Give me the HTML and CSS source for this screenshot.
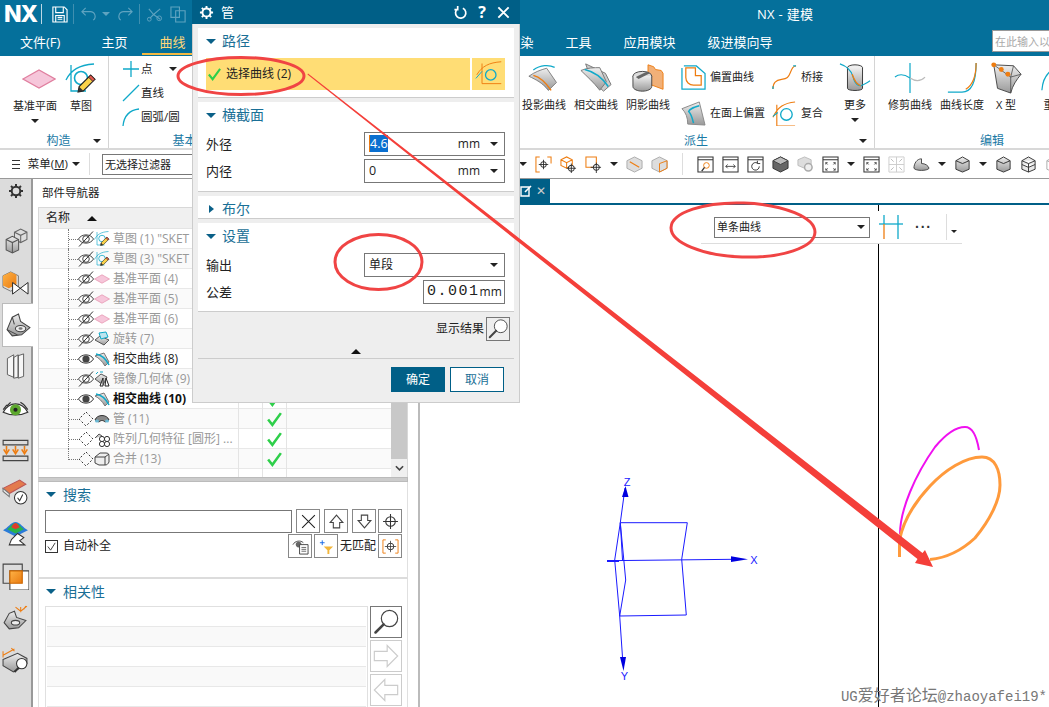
FILE: index.html
```html
<!DOCTYPE html>
<html lang="zh-CN">
<head>
<meta charset="utf-8">
<title>NX - 建模</title>
<link rel="stylesheet" href="styles.css">
</head>
<body>
<svg class="defs" width="0" height="0" aria-hidden="true">
  <defs>
    <linearGradient id="gr" x1="0" y1="0" x2="0" y2="1"><stop offset="0" stop-color="#eee"/><stop offset="1" stop-color="#999"/></linearGradient>
    <linearGradient id="gro" x1="0" y1="0" x2="1" y2="1"><stop offset="0" stop-color="#ffb347"/><stop offset="1" stop-color="#e87a10"/></linearGradient>
    <symbol id="gear" viewBox="0 0 16 16"><circle cx="8" cy="8" r="4.300" fill="none" stroke="currentColor" stroke-width="2"/><path d="M8 1v2.600M8 12.400V15M1 8h2.600M12.400 8H15M3 3l1.900 1.900M11.100 11.100L13 13M13 3l-1.900 1.900M4.900 11.100L3 13" stroke="currentColor" stroke-width="2"/></symbol>
    <symbol id="plane" viewBox="0 0 34 20"><path d="M1 10L17 1l16 9-16 9z" fill="#f6c6da" stroke="#e07f9f" stroke-width="1.200"/></symbol>
    <symbol id="pencil" viewBox="0 0 20 20"><path d="M14 2l4 4L7 17l-5 1 1-5z" fill="#fad24a" stroke="#222" stroke-width="1.100"/><path d="M14 2l4 4-2 2-4-4z" fill="#e2574c" stroke="#222" stroke-width=".8"/><path d="M3 13l4 4-5 1z" fill="#333"/></symbol>
    <symbol id="sketch" viewBox="0 0 32 32"><path d="M1 17C6 7 14 2 29 1M6 2v26h15" fill="none" stroke="#10a9c9" stroke-width="1.300"/><circle cx="16" cy="15" r="6.500" fill="none" stroke="#10a9c9" stroke-width="1.600"/><use href="#pencil" x="11" y="10" width="21" height="21"/></symbol>
    <symbol id="point" viewBox="0 0 20 20"><path d="M10 2v16M2 10h16" stroke="#10a9c9" stroke-width="1.300"/></symbol>
    <symbol id="line" viewBox="0 0 20 20"><path d="M2 18L18 2" stroke="#10a9c9" stroke-width="1.300"/></symbol>
    <symbol id="arc" viewBox="0 0 20 20"><path d="M2 19C3 9 9 3 18 2" fill="none" stroke="#10a9c9" stroke-width="1.300"/></symbol>
    <symbol id="project" viewBox="0 0 36 32"><path d="M6 7C14 1 24 1 30 4" fill="none" stroke="#10a9c9" stroke-width="1.400"/><path d="M1 14C8 9 14 7 21 5l11 16-9 9C16 21 9 18 1 14z" fill="url(#gr)" stroke="#777"/><path d="M6 13c8 2 14 8 20 17" fill="none" stroke="#ee7d11" stroke-width="1.600"/></symbol>
    <symbol id="intersect" viewBox="0 0 34 32"><path d="M6 1l21 10 6 12-8 7-13-12z" fill="#ccc" stroke="#777"/><path d="M1 8c7-3 14-3 20-3l7 15-7 9C14 20 8 15 1 8z" fill="url(#gr)" stroke="#777"/><path d="M5 7c9 2 18 8 25 18" fill="none" stroke="#10a9c9" stroke-width="1.600"/></symbol>
    <symbol id="shadow" viewBox="0 0 34 32"><path d="M17 2l6 2 2 3 6 1 2 3v17L17 22z" fill="#f1b078" stroke="#ee7d11"/><ellipse cx="11" cy="14" rx="10" ry="5" fill="#ddd" stroke="#444"/><path d="M1 14v11c0 3 5 5 10 5s10-2 10-5V14" fill="url(#gr)" stroke="#444"/><path d="M4 15L16 9l3 2-12 6z" fill="#666"/></symbol>
    <symbol id="offset" viewBox="0 0 26 26"><path d="M3 1H16L25 9V25H1V3" fill="none" stroke="#10a9c9" stroke-width="1.300"/><path d="M5 3v10a8 8 0 0 0 8 8h8V11h-6V3z" fill="none" stroke="#ee7d11" stroke-width="1.300"/></symbol>
    <symbol id="faceoffset" viewBox="0 0 26 26"><path d="M1 8L19 1l6 24-18-1C7 17 5 12 1 8z" fill="url(#gr)" stroke="#888"/><path d="M19 5C12 7 9 8 8 11c3 3 4 8 5 12" fill="none" stroke="#10a9c9" stroke-width="1.600"/></symbol>
    <symbol id="bridge" viewBox="0 0 26 26"><path d="M1 25C1 18 4 16 10 15S17 13 19 8 22 1 25 1" fill="none" stroke="#ee7d11" stroke-width="1.200"/><path d="M1 25v-3M25 1h-3" stroke="#10a9c9" stroke-width="1.300"/></symbol>
    <symbol id="composite" viewBox="0 0 26 26"><path d="M1 17C6 6 13 2 24 1M5 4v22h19" fill="none" stroke="#ee7d11" stroke-width="1.200"/><circle cx="15" cy="14" r="6" fill="none" stroke="#10a9c9" stroke-width="1.400"/><path d="M1 16l5-4" stroke="#10a9c9" stroke-width="1.200"/></symbol>
    <symbol id="more" viewBox="0 0 34 32"><ellipse cx="17" cy="5" rx="8" ry="3" fill="#eee" stroke="#333"/><path d="M9 5v22c0 3 16 3 16 0V5" fill="url(#gr)" stroke="#333"/><path d="M1 1c6 2 12 6 14 14s6 10 9 9 6-3 9-5" fill="none" stroke="#10a9c9" stroke-width="1.200"/><path d="M14 12c2 6 5 11 9 12" fill="none" stroke="#ee7d11" stroke-width="1.400"/></symbol>
    <symbol id="trim" viewBox="0 0 34 34"><path d="M17 1v32" stroke="#10a9c9" stroke-width="1.300"/><path d="M1 16c5-4 10-3 16 1" fill="none" stroke="#10a9c9" stroke-width="1.200"/><path d="M17 17c6 4 11 4 16-1" fill="none" stroke="#bbb" stroke-width="1.200"/></symbol>
    <symbol id="length" viewBox="0 0 34 34"><path d="M2 32h15C26 32 32 24 32 1" fill="none" stroke="#10a9c9" stroke-width="1.300"/><path d="M32 1c0 13-3 23-11 28" fill="none" stroke="#ee7d11" stroke-width="1.300"/></symbol>
    <symbol id="xform" viewBox="0 0 34 34"><path d="M4 3l21 1 8 9c-5 6-9 12-11 20L8 28z" fill="url(#gr)" stroke="#444"/><path d="M25 4l-3 12L4 3M22 16l11-3M22 16v17" fill="none" stroke="#444" stroke-width=".8"/><g fill="#ee7d11"><circle cx="4" cy="3" r="2.600"/><circle cx="12" cy="8" r="2.600"/><circle cx="19" cy="13" r="2.600"/></g></symbol>
    <symbol id="arcthin" viewBox="0 0 34 34"><path d="M2 30C3 14 12 4 32 2" fill="none" stroke="#10a9c9" stroke-width="1.300"/></symbol>
    <symbol id="bracket" viewBox="0 0 18 18"><path d="M5 1H1v16h4M13 1h4v7" fill="none" stroke="#ee7d11" stroke-width="1.100"/><circle cx="9" cy="9" r="3" fill="none" stroke="#222"/><path d="M9 4v10M4 9h10" stroke="#222" stroke-width=".9"/></symbol>
    <symbol id="cubecross" viewBox="0 0 18 18"><path d="M1 4l6-3 6 3v6l-6 3-6-3zM1 4l6 3 6-3M7 7v6" fill="none" stroke="#ee7d11" stroke-width="1.100"/><circle cx="12" cy="13" r="3.200" fill="#fff" stroke="#222"/><path d="M12 8v10M7 13h10" stroke="#222" stroke-width=".9"/></symbol>
    <symbol id="squarecross" viewBox="0 0 18 18"><path d="M1 1h11v11H1z" fill="none" stroke="#ee7d11" stroke-width="1.100"/><circle cx="12" cy="12" r="3.200" fill="#fff" stroke="#222"/><path d="M12 7v11M6 12h11" stroke="#222" stroke-width=".9"/></symbol>
    <symbol id="cubecut" viewBox="0 0 18 18"><path d="M1 5l8-4 8 4v8l-8 4-8-4z" fill="#ddd" stroke="#aaa"/><path d="M4 6l10 6" stroke="#ee7d11" stroke-width="1.200"/></symbol>
    <symbol id="cubeface" viewBox="0 0 18 18"><path d="M1 5l8-4 8 4v8l-8 4-8-4z" fill="#ddd" stroke="#aaa"/><path d="M9 8l8-3v8l-8 4z" fill="none" stroke="#ee7d11"/></symbol>
    <symbol id="winzoom" viewBox="0 0 18 18"><path d="M1 1h16v16H1zM1 4h16" fill="none" stroke="#333" stroke-width="1.100"/><circle cx="10" cy="10" r="3" fill="none" stroke="#ee7d11"/><path d="M8 12l-3 4" stroke="#333" stroke-width="1.400"/></symbol>
    <symbol id="winarrow" viewBox="0 0 18 18"><path d="M1 1h16v16H1zM1 4h16" fill="none" stroke="#333" stroke-width="1.100"/><path d="M4 11h10M6 9l-2 2 2 2M12 9l2 2-2 2" fill="none" stroke="#333" stroke-width=".9"/></symbol>
    <symbol id="winrot" viewBox="0 0 18 18"><path d="M1 1h16v16H1zM1 4h16" fill="none" stroke="#333" stroke-width="1.100"/><path d="M13 11a4 4 0 1 1-2-3.500M11 5v3h3" fill="none" stroke="#333"/></symbol>
    <symbol id="darkcube" viewBox="0 0 18 18"><path d="M1 5l8-4 8 4v8l-8 4-8-4z" fill="#666" stroke="#333"/><path d="M1 5l8-4 8 4-8 4z" fill="#bbb" stroke="#444"/></symbol>
    <symbol id="lightgear" viewBox="0 0 18 18"><path d="M1 4l7-3 7 3v6l-7 3-7-3z" fill="#ddd" stroke="#bbb"/><circle cx="12" cy="12" r="4" fill="#eee" stroke="#aaa" stroke-width="1.600"/></symbol>
    <symbol id="winfit" viewBox="0 0 18 18"><path d="M1 1h16v16H1zM1 4h16" fill="none" stroke="#333" stroke-width="1.100"/><path d="M4 7l2 2M4 7h2M4 7v2M14 7l-2 2M14 7h-2M14 7v2M4 15l2-2M4 15h2M4 15v-2M14 15l-2-2M14 15h-2M14 15v-2" fill="none" stroke="#333" stroke-width=".8"/></symbol>
    <symbol id="fitlight" viewBox="0 0 18 18"><path d="M1 1h16v16H1zM9 1v16M1 9h16" fill="none" stroke="#ccc"/><path d="M3 3l3 3M15 3l-3 3M3 15l3-3M15 15l-3-3" stroke="#bbb"/></symbol>
    <symbol id="shade" viewBox="0 0 18 18"><path d="M1 13c0-5 3-10 8-10v5c4 0 7 2 8 5-2 3-14 3-16 0z" fill="url(#gr)" stroke="#444"/></symbol>
    <symbol id="cylcube" viewBox="0 0 18 18"><path d="M2 5l7-4 7 4v9l-7 3-7-3z" fill="url(#gr)" stroke="#333"/><path d="M2 5l7 3 7-3" fill="none" stroke="#333"/></symbol>
    <symbol id="wirecube" viewBox="0 0 18 18"><path d="M2 5l7-4 7 4v9l-7 3-7-3zM2 5l7 3 7-3M2 9l7 3 7-3M9 8v9" fill="#e8e8e8" stroke="#333"/></symbol>
    <symbol id="ghostcube" viewBox="0 0 18 18"><path d="M2 5l7-4 7 4v9l-7 3-7-3zM2 5l7 3 7-3M9 8v9" fill="none" stroke="#aaa"/></symbol>
    <symbol id="eye" viewBox="0 0 16 16"><path d="M.5 8c3-5.500 12-5.500 15 0-3 5.500-12 5.500-15 0z" fill="#fff" stroke="#333"/><circle cx="8" cy="8" r="3.600" fill="#444"/></symbol>
    <symbol id="eyeoff" viewBox="0 0 16 16"><path d="M.5 8c3-5.500 12-5.500 15 0-3 5.500-12 5.500-15 0z" fill="#fff" stroke="#444"/><circle cx="8" cy="8" r="3.300" fill="none" stroke="#444"/><path d="M1 15.500L15 .5" stroke="#333"/></symbol>
    <symbol id="hidden" viewBox="0 0 16 16"><path d="M8 1l7 7-7 7-7-7z" fill="none" stroke="#333" stroke-dasharray="2 2"/></symbol>
    <symbol id="revolve" viewBox="0 0 16 16"><path d="M1 9l5-4 9 4-5 5z" fill="url(#gr)" stroke="#555"/><path d="M5 2l7-1 2 5-7 2z" fill="#bde4ef" stroke="#10a9c9"/></symbol>
    <symbol id="curve16" viewBox="0 0 16 16"><path d="M1 5l9-3 5 9-4 4C8 10 5 7 1 5z" fill="url(#gr)" stroke="#777"/><path d="M2 3c6 1 10 5 13 11" fill="none" stroke="#10a9c9" stroke-width="1.600"/></symbol>
    <symbol id="mirror" viewBox="0 0 16 16"><path d="M1 8l6-5 6 3-4 8z" fill="url(#gr)" stroke="#555"/><path d="M6 15l3-8v8zM11 15l1-8 3 8z" fill="#fff" stroke="#222"/><path d="M2 3l2-2M6 1h3" stroke="#10a9c9"/></symbol>
    <symbol id="tube" viewBox="0 0 16 16"><path d="M1 9c2-6 12-6 14 0l-4 2c-2-2-4-2-6 0z" fill="#888" stroke="#333"/><ellipse cx="3" cy="10" rx="2" ry="1.500" fill="#6bb9d4"/><ellipse cx="13" cy="10" rx="2" ry="1.500" fill="#6bb9d4"/></symbol>
    <symbol id="pattern" viewBox="0 0 16 16"><path d="M1 7l4-4 3 2" fill="url(#gr)" stroke="#555"/><g fill="#fff" stroke="#333"><circle cx="8" cy="8" r="2.600"/><circle cx="13" cy="8" r="2.600"/><circle cx="8" cy="13" r="2.600"/><circle cx="13" cy="13" r="2.600"/></g></symbol>
    <symbol id="unite" viewBox="0 0 16 16"><path d="M1 6l5-4h6c2 0 3 1 3 3v6c-1 2-2 3-4 3H5l-4-2z" fill="#eee" stroke="#444"/><path d="M1 6h10l4-3M11 6v8" fill="none" stroke="#444"/></symbol>
    <symbol id="blocks" viewBox="0 0 24 26"><path d="M11 5l6-3 6 3v7l-6 3-6-3z" fill="#ddd" stroke="#666"/><path d="M11 5l6 3 6-3M17 8v7" fill="none" stroke="#666"/><path d="M3 12l6-3 6 3v10l-6 3-6-3z" fill="url(#gr)" stroke="#555"/><path d="M3 12l6 3 6-3M9 15v10" fill="none" stroke="#555"/></symbol>
    <symbol id="assembly" viewBox="0 0 28 26"><path d="M1 6l8-4 8 4v12l-8 4-8-4z" fill="#ddd" stroke="#777"/><path d="M1 6l8-4 6 3v10l-8 4-6-3z" fill="url(#gro)"/><path d="M11 13v12l16-12v12z" fill="#fff" stroke="#222"/></symbol>
    <symbol id="part" viewBox="0 0 26 26"><path d="M2 17L7 5l6-3 2 7 9 6-8 7-9 1z" fill="url(#gr)" stroke="#444"/><path d="M2 17l10 5M7 5l2 7" fill="none" stroke="#444"/><ellipse cx="15" cy="16" rx="5" ry="3" fill="#eee" stroke="#444"/><ellipse cx="15" cy="16" rx="2" ry="1.200" fill="#777"/></symbol>
    <symbol id="books" viewBox="0 0 20 30"><path d="M1 6l7-4v25l-7-3zM8 5l5-3v25l-5 1zM13 3l6-2v25l-6 2z" fill="#f6f6f6" stroke="#555"/></symbol>
    <symbol id="eyegreen" viewBox="0 0 22 14"><path d="M1 10c5-9 15-9 20 0-6 3-14 3-20 0z" fill="#fff" stroke="#333"/><circle cx="11" cy="8" r="4.500" fill="#5da82e"/><circle cx="11" cy="8" r="1.700" fill="#222"/><path d="M1 8l3-4M4 5l3-3M15 2l3 2M18 4l3 4" stroke="#333"/></symbol>
    <symbol id="arrows" viewBox="0 0 24 20"><path d="M1 1h22v4H1zM1 15h22v4H1z" fill="none" stroke="#444"/><g fill="none" stroke="#ee7d11" stroke-width="1.400"><path d="M4 6v5M1.500 9L4 13l2.500-4M12 6v5M9.500 9l2.500 4 2.500-4M20 6v5M17.500 9l2.500 4 2.500-4"/></g></symbol>
    <symbol id="card" viewBox="0 0 26 26"><path d="M1 9l16-8 6 4-16 9z" fill="#e37b4e" stroke="#b55"/><path d="M1 9l6 5v3L1 12z" fill="#eee" stroke="#777"/><circle cx="18" cy="18" r="6" fill="#fff" stroke="#333"/><path d="M15 18l2 3 3-6" fill="none" stroke="#333"/></symbol>
    <symbol id="rainbow" viewBox="0 0 26 26"><path d="M1 9c4-2 8-8 12-8s8 6 12 8l-12 6z" fill="#2a7bd8"/><path d="M5 8c3-2 5-6 8-6s5 4 8 6l-8 4z" fill="#29b34a"/><path d="M9 6c1-2 3-4 4-4s3 2 4 4l-4 2z" fill="#e03a2c"/><path d="M9 18l6-6 6 4-4 3 5 4H7z" fill="#fff" stroke="#333"/></symbol>
    <symbol id="overlap" viewBox="0 0 24 24"><path d="M1 1h17v17H1z" fill="none" stroke="#444"/><path d="M7 7h17v17H7z" fill="#fff" stroke="#444"/><path d="M7 7h11v11H7z" fill="url(#gro)" stroke="#c60"/></symbol>
    <symbol id="dimpart" viewBox="0 0 26 26"><path d="M2 17l5-9 5-2 2 6 9 3-7 7-9 1z" fill="url(#gr)" stroke="#444"/><ellipse cx="13" cy="17" rx="4" ry="2.200" fill="#eee" stroke="#444"/><path d="M13 2l5 4 6-5M18 2v5M23 1l-2 3" fill="none" stroke="#ee7d11"/></symbol>
    <symbol id="dimbox" viewBox="0 0 26 26"><path d="M1 12l14-6 9 5v5l-13 8-10-6z" fill="url(#gr)" stroke="#444"/><circle cx="19" cy="16" r="5" fill="#fff" stroke="#333"/><path d="M16 20l-4 4" stroke="#333" stroke-width="2"/><path d="M1 8l11-6M1 4v6M9 1l3 3" fill="none" stroke="#ee7d11"/></symbol>
    <symbol id="lens" viewBox="0 0 24 24"><circle cx="15" cy="9" r="7" fill="#fff" stroke="#444"/><path d="M10 14l-7 7" stroke="#444" stroke-width="2.200" stroke-linecap="round"/></symbol>
    <symbol id="target" viewBox="0 0 16 16"><circle cx="8" cy="8" r="4.500" fill="none" stroke="#333"/><path d="M8 1v14M1 8h14" stroke="#333"/></symbol>
    <symbol id="pick" viewBox="0 0 32 32"><path d="M2 17C8 7 16 3 30 2M8 4v23h22" fill="none" stroke="#ee7d11" stroke-width="1.100"/><circle cx="18" cy="17" r="6" fill="none" stroke="#10a9c9" stroke-width="1.500"/><path d="M1 21l7-8" stroke="#10a9c9" stroke-width="1.100"/></symbol>
  </defs>
</svg>

<div class="app">
  <header class="titlebar">
    <b class="logo">NX</b>
    <span class="tb-sep"></span>
    <svg class="tb-ico" viewBox="0 0 18 18"><path d="M2 1h12l3 3v13H2zM5 1v6h8V1M5 17v-7h9v7M7 12h5M7 14h5" fill="none" stroke="#fff" stroke-width="1.200"/></svg>
    <span class="tb-sep tb-sep-dim"></span>
    <svg class="tb-ico" viewBox="0 0 18 18"><path d="M6 2L2 6l4 4M2 6h9a5 5 0 0 1 3 9" fill="none" stroke="#5fa3c0" stroke-width="1.200"/></svg>
    <i class="caret caret-dim"></i>
    <svg class="tb-ico" viewBox="0 0 18 18"><path d="M12 2l4 4-4 4M16 6H7a5 5 0 0 0-3 9" fill="none" stroke="#5fa3c0" stroke-width="1.200"/></svg>
    <span class="tb-sep tb-sep-dim"></span>
    <svg class="tb-ico" viewBox="0 0 18 18"><path d="M8 9L3 3M8 9l7-6M8 9l-4 4M8 9l7 5" fill="none" stroke="#5fa3c0" stroke-width="1.200"/><circle cx="3.500" cy="14" r="2" fill="none" stroke="#5fa3c0"/><circle cx="14" cy="13" r="2.500" fill="none" stroke="#5fa3c0"/></svg>
    <svg class="tb-ico tb-copy" viewBox="0 0 18 18"><path d="M1 1h9v11H1zM6 5h10v12H6z" fill="none" stroke="#5fa3c0" stroke-width="1.200"/></svg>
    <span class="tb-title">NX - 建模</span>
  </header>

  <nav class="tabs">
    <span class="tab tab-file">文件(F)</span>
    <span class="tab">主页</span>
    <span class="tab tab-on">曲线</span>
    <span class="tab-gap"></span>
    <span class="tab">渲染</span>
    <span class="tab">工具</span>
    <span class="tab">应用模块</span>
    <span class="tab">级进模向导</span>
    <input class="cmd-search" placeholder="在此输入以搜索">
  </nav>

  <section class="ribbon">
    <div class="group g-construct">
      <div class="tools">
        <div class="big big-plane"><svg class="ico32"><use href="#plane" x="3" y="6" width="34" height="20"/></svg><span>基准平面</span><i class="caret"></i></div>
        <div class="big big-sketch"><svg class="ico32"><use href="#sketch"/></svg><span>草图</span></div>
      </div>
      <div class="glabel"><span></span><span>构造</span><i class="caret gcaret"></i></div>
    </div>
    <div class="group g-basic">
      <div class="tools">
        <div class="col">
          <div class="mini"><svg class="ico20"><use href="#point"/></svg><span>点</span><i class="caret"></i></div>
          <div class="mini"><svg class="ico20"><use href="#line"/></svg><span>直线</span></div>
          <div class="mini"><svg class="ico20"><use href="#arc"/></svg><span>圆弧/圆</span></div>
        </div>
      </div>
      <div class="glabel"><span></span><span>基本</span><span></span></div>
    </div>
    <div class="g-spacer"></div>
    <div class="group g-derive">
      <div class="tools">
        <div class="big"><svg class="ico32"><use href="#project"/></svg><span>投影曲线</span></div>
        <div class="big"><svg class="ico32"><use href="#intersect"/></svg><span>相交曲线</span></div>
        <div class="big"><svg class="ico32"><use href="#shadow"/></svg><span>阴影曲线</span></div>
        <div class="col col-a">
          <div class="small"><svg class="ico25"><use href="#offset"/></svg><span>偏置曲线</span></div>
          <div class="small"><svg class="ico25"><use href="#faceoffset"/></svg><span>在面上偏置</span></div>
        </div>
        <div class="col col-b">
          <div class="small"><svg class="ico25"><use href="#bridge"/></svg><span>桥接</span></div>
          <div class="small"><svg class="ico25"><use href="#composite"/></svg><span>复合</span></div>
        </div>
        <div class="big big-more"><svg class="ico32"><use href="#more"/></svg><span>更多</span><i class="caret"></i></div>
      </div>
      <div class="glabel"><span></span><span>派生</span><i class="caret gcaret"></i></div>
    </div>
    <div class="group g-edit">
      <div class="tools">
        <div class="big"><svg class="ico32"><use href="#trim"/></svg><span>修剪曲线</span></div>
        <div class="big"><svg class="ico32"><use href="#length"/></svg><span>曲线长度</span></div>
        <div class="big big-x"><svg class="ico32"><use href="#xform"/></svg><span>X 型</span></div>
        <div class="big big-next"><svg class="ico32"><use href="#arcthin"/></svg><span>重</span></div>
      </div>
      <div class="glabel glabel-edit"><span>编辑</span></div>
    </div>
  </section>

  <div class="quickbar">
    <span class="menu-btn"><span class="burger"></span>菜单(<u>M</u>)<i class="caret"></i></span>
    <span class="q-sep"></span>
    <div class="filter"><span>无选择过滤器</span></div>
    <div class="qicons">
      <i class="caret"></i>
      <svg class="q"><use href="#bracket"/></svg>
      <svg class="q"><use href="#cubecross"/></svg>
      <svg class="q"><use href="#squarecross"/></svg>
      <i class="caret"></i>
      <svg class="q"><use href="#cubecut"/></svg>
      <svg class="q"><use href="#cubeface"/></svg>
      <span class="q-sep q-sep-m"></span>
      <svg class="q"><use href="#winzoom"/></svg>
      <svg class="q"><use href="#winarrow"/></svg>
      <svg class="q"><use href="#winrot"/></svg>
      <svg class="q"><use href="#darkcube"/></svg>
      <svg class="q"><use href="#lightgear"/></svg>
      <svg class="q"><use href="#winfit"/></svg>
      <i class="caret"></i>
      <svg class="q"><use href="#winfit"/></svg>
      <svg class="q"><use href="#fitlight"/></svg>
      <svg class="q"><use href="#shade"/></svg>
      <i class="caret"></i>
      <svg class="q"><use href="#cylcube"/></svg>
      <i class="caret"></i>
      <svg class="q"><use href="#cylcube"/></svg>
      <svg class="q"><use href="#wirecube"/></svg>
      <svg class="q"><use href="#ghostcube"/></svg>
    </div>
  </div>

  <main class="main">
    <aside class="rail">
      <div class="rail-item rail-gear"><svg class="rail-ico16"><use href="#gear"/></svg></div>
      <div class="rail-item rail-first"><svg class="rail-ico"><use href="#blocks"/></svg></div>
      <div class="rail-item"><svg class="rail-ico"><use href="#assembly"/></svg></div>
      <div class="rail-item rail-active"><svg class="rail-ico"><use href="#part"/></svg></div>
      <div class="rail-item"><svg class="rail-ico"><use href="#books"/></svg></div>
      <div class="rail-item"><svg class="rail-ico"><use href="#eyegreen"/></svg></div>
      <div class="rail-item"><svg class="rail-ico"><use href="#arrows"/></svg></div>
      <div class="rail-item"><svg class="rail-ico"><use href="#card"/></svg></div>
      <div class="rail-item"><svg class="rail-ico"><use href="#rainbow"/></svg></div>
      <div class="rail-item"><svg class="rail-ico"><use href="#overlap"/></svg></div>
      <div class="rail-item"><svg class="rail-ico"><use href="#dimpart"/></svg></div>
      <div class="rail-item"><svg class="rail-ico"><use href="#dimbox"/></svg></div>
    </aside>

    <section class="nav">
      <div class="nav-title">部件导航器</div>
      <div class="tree">
        <div class="tree-body">
          <div class="tree-head"><span class="th-name">名称</span><i class="th-up"></i></div>
          <div class="row dim"><span class="branch"></span><svg class="r16"><use href="#eyeoff"/></svg><svg class="r16"><use href="#sketch"/></svg><span class="rname">草图 (1) "SKET</span><span class="c"></span><span class="c"></span><span class="c"></span></div>
          <div class="row dim"><span class="branch"></span><svg class="r16"><use href="#eyeoff"/></svg><svg class="r16"><use href="#sketch"/></svg><span class="rname">草图 (3) "SKET</span><span class="c"></span><span class="c"></span><span class="c"></span></div>
          <div class="row dim"><span class="branch"></span><svg class="r16"><use href="#eyeoff"/></svg><svg class="r16"><use href="#plane"/></svg><span class="rname">基准平面 (4)</span><span class="c"></span><span class="c"></span><span class="c"></span></div>
          <div class="row dim"><span class="branch"></span><svg class="r16"><use href="#eyeoff"/></svg><svg class="r16"><use href="#plane"/></svg><span class="rname">基准平面 (5)</span><span class="c"></span><span class="c"></span><span class="c"></span></div>
          <div class="row dim"><span class="branch"></span><svg class="r16"><use href="#eyeoff"/></svg><svg class="r16"><use href="#plane"/></svg><span class="rname">基准平面 (6)</span><span class="c"></span><span class="c"></span><span class="c"></span></div>
          <div class="row dim"><span class="branch"></span><svg class="r16"><use href="#eyeoff"/></svg><svg class="r16"><use href="#revolve"/></svg><span class="rname">旋转 (7)</span><span class="c"></span><span class="c"></span><span class="c"></span></div>
          <div class="row"><span class="branch"></span><svg class="r16"><use href="#eye"/></svg><svg class="r16"><use href="#curve16"/></svg><span class="rname">相交曲线 (8)</span><span class="c"></span><span class="c"></span><span class="c"></span></div>
          <div class="row dim"><span class="branch"></span><svg class="r16"><use href="#eyeoff"/></svg><svg class="r16"><use href="#mirror"/></svg><span class="rname">镜像几何体 (9)</span><span class="c"></span><span class="c"></span><span class="c"></span></div>
          <div class="row strong"><span class="branch"></span><svg class="r16"><use href="#eye"/></svg><svg class="r16"><use href="#curve16"/></svg><span class="rname">相交曲线 (10)</span><span class="c"></span><span class="c"><svg class="chk" viewBox="0 0 16 16"><path d="M2 8l4 5 8-11"/></svg></span><span class="c"></span></div>
          <div class="row dim"><span class="branch"></span><svg class="r16"><use href="#hidden"/></svg><svg class="r16"><use href="#tube"/></svg><span class="rname">管 (11)</span><span class="c"></span><span class="c"><svg class="chk" viewBox="0 0 16 16"><path d="M2 8l4 5 8-11"/></svg></span><span class="c"></span></div>
          <div class="row dim"><span class="branch"></span><svg class="r16"><use href="#hidden"/></svg><svg class="r16"><use href="#pattern"/></svg><span class="rname">阵列几何特征 [圆形] ...</span><span class="c"></span><span class="c"><svg class="chk" viewBox="0 0 16 16"><path d="M2 8l4 5 8-11"/></svg></span><span class="c"></span></div>
          <div class="row dim row-last"><span class="branch"></span><svg class="r16"><use href="#hidden"/></svg><svg class="r16"><use href="#unite"/></svg><span class="rname">合并 (13)</span><span class="c"></span><span class="c"><svg class="chk" viewBox="0 0 16 16"><path d="M2 8l4 5 8-11"/></svg></span><span class="c"></span></div>
          <div class="row row-tail"><span class="rname"></span><span class="c"></span><span class="c"></span><span class="c"></span></div>
        </div>
        <div class="vscroll"><span class="thumb"></span><svg class="chev" viewBox="0 0 10 6"><path d="M1 1l4 4 4-4" fill="none" stroke="#444" stroke-width="1.800"/></svg></div>
      </div>
      <div class="sash"></div>
      <div class="panel panel-search">
        <div class="ph"><i class="tri"></i><span>搜索</span></div>
        <div class="sr1">
          <input class="sinput">
          <span class="ib"><svg viewBox="0 0 16 16"><path d="M2 2l12 12M14 2L2 14" stroke="#222"/></svg></span>
          <span class="ib"><svg viewBox="0 0 16 16"><path d="M8 2l6 7h-3v5H5V9H2z" fill="none" stroke="#444"/></svg></span>
          <span class="ib"><svg viewBox="0 0 16 16"><path d="M8 14l6-7h-3V2H5v5H2z" fill="none" stroke="#444"/></svg></span>
          <span class="ib ib-t"><svg><use href="#target"/></svg></span>
        </div>
        <div class="sr2">
          <span class="cb"><svg viewBox="0 0 12 12"><path d="M2 6l3 4 5-8" fill="none" stroke="#333"/></svg></span>
          <span class="cbl">自动补全</span>
          <span class="sr2-right">
            <span class="ib"><svg viewBox="0 0 18 18"><path d="M1 7c2-4 8-5 11-2" fill="none" stroke="#444"/><circle cx="7" cy="7" r="3" fill="#666"/><path d="M8 7h9v10H8z" fill="#fff" stroke="#444"/><path d="M10 10h5M10 12h5M10 14h5" stroke="#666"/></svg></span>
            <span class="ib ib-g"><svg viewBox="0 0 18 18"><path d="M2 5h5M4.500 2.500v5" stroke="#1668e8"/><path d="M6 9h10l-4 4v4h-2v-4z" fill="#f3b63a"/></svg></span>
            <span class="nomatch">无匹配</span>
            <span class="ib"><svg viewBox="0 0 18 18"><path d="M4 2H1v14h3M14 2h3v14h-3" fill="none" stroke="#ee7d11"/><circle cx="9" cy="9" r="3.500" fill="none" stroke="#333"/><path d="M9 3v12M3 9h12" stroke="#333" stroke-width=".8"/></svg></span>
          </span>
        </div>
      </div>
      <div class="panel panel-rel">
        <div class="ph"><i class="tri"></i><span>相关性</span></div>
        <div class="rel">
          <div class="rel-list"><span></span><span></span><span></span><span></span><span></span></div>
          <div class="rel-btns">
            <span class="rb"><svg viewBox="0 0 24 24"><use href="#lens"/></svg></span>
            <span class="rb rb-off"><svg viewBox="0 0 24 24"><path d="M2 8h11V3l9 9-9 9v-5H2z" fill="none" stroke="#ccc"/></svg></span>
            <span class="rb rb-off"><svg viewBox="0 0 24 24"><path d="M22 8H11V3l-9 9 9 9v-5h11z" fill="none" stroke="#ccc"/></svg></span>
          </div>
        </div>
      </div>
    </section>

    <section class="graphics">
      <div class="gtabs">
        <span class="gtab"><svg class="gtab-ico" viewBox="0 0 12 12"><path d="M1 2h8v9H1z" fill="none" stroke="#fff" stroke-width="1.400"/><path d="M5 7l6-6" stroke="#fff" stroke-width="1.600"/></svg><span class="gtab-x">✕</span></span>
      </div>
      <svg class="canvas" viewBox="420 205 629 502" preserveAspectRatio="none">
        <path class="vline" d="M878.500 205V707"/>
        <g fill="none" stroke="#1a1aff" stroke-width="1">
          <path d="M620.300 522.700H687.300L681.700 559.300 686.300 615 619.700 616"/>
          <path d="M620.300 522.700L614.700 560 619.700 616 625.700 580z"/>
          <path d="M607.300 560.700L733 559.300"/>
          <path d="M622.500 560L620.300 522.700 625 488"/>
          <path d="M619.700 616L622.700 660"/>
          <path d="M607 561h12" stroke-width="2"/>
        </g>
        <g fill="#0000e0">
          <path d="M731 556.300L748 559.300 731 562z"/>
          <path d="M625.500 486L628.500 497 622 497z"/>
          <path d="M620 657L626 657 623.500 671z"/>
        </g>
        <text class="axis" x="754" y="563.500" text-anchor="middle">X</text>
        <text class="axis" x="627" y="486" text-anchor="middle">Z</text>
        <text class="axis" x="624.500" y="680" text-anchor="middle">Y</text>
        <path d="M900 534C900 510 915 475 935 447 945 435 955 427 965 427 973 427 977 438 979 450" fill="none" stroke="#f010f0" stroke-width="2"/>
        <path d="M899.500 557V540C903 522 915 502 930 486 945 470 965 457 982 457 995 457 1000 470 1000 485 1000 500 990 520 975 538 960 552 945 558 930 559.500" fill="none" stroke="#ff9a3c" stroke-width="3"/>
      </svg>
      <div class="selbar">
        <div class="selcurve"><span>单条曲线</span><i class="caret"></i></div>
        <svg class="selico" viewBox="0 0 24 24"><path d="M0 9H24" stroke="#10a9c9" stroke-width="1.300"/><path d="M5 0v9" stroke="#10a9c9" stroke-width="1.300"/><path d="M5 9v15" stroke="#ee7d11" stroke-width="1.300"/><path d="M19 0v24" stroke="#10a9c9" stroke-width="1.300"/></svg>
        <span class="seldots">···</span>
        <span class="selsep"></span>
        <i class="caret selcaret"></i>
      </div>
      <div class="watermark">UG<span class="wm-cjk">爱好者论坛</span>@zhaoyafei19*</div>
    </section>
  </main>
</div>

<div class="dialog">
  <div class="dlg-title">
    <svg class="dlg-gear"><use href="#gear"/></svg>
    <span class="dlg-name">管</span>
    <svg class="dlg-ctl" viewBox="0 0 16 16"><path d="M10.500 3.500A5.500 5.500 0 1 1 5 4M5 1v4H1.500" fill="none" stroke="#fff" stroke-width="1.800"/></svg>
    <span class="dlg-q">?</span>
    <svg class="dlg-ctl" viewBox="0 0 16 16"><path d="M2.500 2.500l11 11M13.500 2.500l-11 11" stroke="#fff" stroke-width="2"/></svg>
  </div>
  <div class="dlg-body">
    <section class="sec">
      <div class="sec-h"><i class="tri"></i><span>路径</span></div>
      <div class="pick-row">
        <div class="pick-main"><svg class="pick-chk" viewBox="0 0 16 16"><path d="M2 8l4 5 8-11"/></svg><span>选择曲线 (2)</span></div>
        <div class="pick-btn"><svg><use href="#pick"/></svg></div>
      </div>
    </section>
    <section class="sec sec-cross">
      <div class="sec-h"><i class="tri"></i><span>横截面</span></div>
      <div class="f-row"><label>外径</label><div class="box box-w"><span class="val"><mark class="sel">4.6</mark></span><span class="unit">mm</span><i class="caret"></i></div></div>
      <div class="f-row"><label>内径</label><div class="box box-w"><span class="val">0</span><span class="unit">mm</span><i class="caret"></i></div></div>
    </section>
    <section class="sec sec-bool">
      <div class="sec-h sec-h-c"><i class="tri tri-r"></i><span>布尔</span></div>
    </section>
    <section class="sec sec-set">
      <div class="sec-h"><i class="tri"></i><span>设置</span></div>
      <div class="f-row"><label>输出</label><div class="box box-w"><span class="val val-cn">单段</span><i class="caret"></i></div></div>
      <div class="f-row"><label>公差</label><div class="box box-s"><span class="val val-tol">0.001</span><span class="unit">mm</span></div></div>
    </section>
    <div class="show"><span>显示结果</span><span class="show-btn"><svg viewBox="0 0 24 24"><use href="#lens"/></svg></span></div>
    <div class="fold"><i class="fold-up"></i></div>
    <div class="act"><span class="btn btn-ok">确定</span><span class="btn">取消</span></div>
  </div>
</div>

<svg class="marks" viewBox="0 0 1049 707" aria-hidden="true">
  <g fill="none" stroke="#f04444" stroke-width="3">
    <ellipse cx="241" cy="76" rx="63" ry="18.500"/>
    <ellipse cx="378.500" cy="262" rx="43.500" ry="27.500"/>
    <ellipse cx="743" cy="230" rx="72" ry="27" transform="rotate(2 743 230)"/>
  </g>
  <path d="M308 73.500L922.500 552.900 925 550 933 567 915 563 917.500 559.100 307.500 74.500z" fill="#f43f3a"/>
</svg>
</body>
</html>
```
FILE: styles.css
```css
* { box-sizing: border-box; }
html, body { margin: 0; padding: 0; }
body {
  position: relative;
  width: 1049px;
  height: 707px;
  overflow: hidden;
  background: #fff;
  color: #222;
  font: 12px/16px "Open Sans", "Noto Sans CJK SC", sans-serif;
}
svg { display: block; }
.defs { position: absolute; }
.app { display: flex; flex-direction: column; height: 707px; }

.caret { display: block; width: 0; height: 0; flex: none; border: 4px solid transparent; border-top: 4px solid #222; border-bottom: 0; }
.caret-dim { border-top-color: #5fa3c0; margin: 0 7px 0 5px; }

.titlebar { flex: none; display: flex; align-items: center; height: 28px; background: #05709b; color: #fff; padding-left: 4px; }
.logo { font: 800 23px/28px Inter, "Open Sans", sans-serif; width: 33px; letter-spacing: -1px; }
.tb-sep { width: 1px; height: 20px; background: #bcd8e5; margin: 0 9px 0 4px; }
.tb-sep-dim { background: #3f8fb0; margin: 0 6px 0 5px; }
.tb-ico { width: 17px; height: 17px; flex: none; }
.tb-copy { margin-left: 7px; }
.tb-title { margin-left: 570px; font-size: 13px; letter-spacing: .3px; white-space: nowrap; }

.tabs { flex: none; position: relative; display: flex; gap: 32px; height: 28px; background: #05709b; padding-left: 20px; color: #fff; font-size: 13px; line-height: 28px; overflow: hidden; }
.tab { white-space: nowrap; height: 28px; }
.tab-gap { flex: none; width: 258px; }
.tab-file { margin-right: 9px; }
.tab-on { color: #ffd77a; position: relative; }
.tab-on::after { content: ""; position: absolute; left: -17px; right: -17px; bottom: 1px; height: 2px; background: #f5b942; }
.cmd-search { position: absolute; left: 992px; top: 2px; width: 70px; height: 22px; padding: 0 2px; border: 1px solid #999; font: 11px "Open Sans", "Noto Sans CJK SC", sans-serif; background: #fff; }
.cmd-search::placeholder { color: #aaa; }

.ribbon { flex: none; display: flex; height: 94px; background: #fff; border-bottom: 2px solid #d8d8d8; overflow: hidden; font-size: 11px; line-height: 14px; color: #222; }
.group { flex: none; display: flex; flex-direction: column; position: relative; }
.tools { flex: 1; display: flex; min-height: 0; }
.glabel { flex: none; height: 20px; display: grid; grid-template-columns: 1fr auto 1fr; align-items: center; color: #1c7aa5; font-size: 12px; line-height: 14px; margin-bottom: -3px; }
.gcaret { justify-self: end; margin-right: 7px; }
.g-construct { width: 109px; border-right: 1px solid #d4d4d4; padding: 6px 0 0 9px; }
.g-basic { width: 139px; padding: 1px 0 0 12px; }
.g-spacer { width: 245px; flex: none; }
.g-derive { width: 382px; padding: 5px 0 0 25px; border-right: 1px solid #d4d4d4; }
.g-edit { flex: 1; padding: 5px 0 0 9px; }
.glabel-edit { grid-template-columns: 1fr; width: 156px; justify-items: center; }
.glabel-edit span { margin-left: 60px; }

.big { flex: none; width: 52px; display: flex; flex-direction: column; align-items: center; padding-top: 1px; }
.big > span { margin-top: 4px; white-space: nowrap; }
.big .caret { margin-top: 6px; }
.big-sketch { width: 40px; }
.big-more { width: 40px; margin-left: -2px; }
.big-x { width: 36px; }
.big-next { margin-left: -1px; }
.big-next .ico32 { margin-left: 14px; }
.ico32 { width: 32px; height: 32px; flex: none; overflow: visible; }
.ico20 { width: 20px; height: 20px; flex: none; }
.ico25 { width: 25px; height: 25px; flex: none; }

.col { flex: none; display: flex; flex-direction: column; }
.mini { height: 24px; display: flex; align-items: center; width: 64px; white-space: nowrap; font-size: 11.5px; }
.mini .caret { margin-left: 16px; }
.col-a { width: 91px; margin-left: 7px; padding-top: 3px; gap: 10px; }
.col-b { width: 65px; padding-top: 3px; gap: 10px; }
.small { display: flex; align-items: center; gap: 4px; height: 26px; white-space: nowrap; }

.quickbar { flex: none; display: flex; align-items: center; height: 29px; background: #fff; border-bottom: 1px solid #999; padding-left: 12px; overflow: hidden; }
.menu-btn { display: flex; align-items: center; width: 68px; white-space: nowrap; font-size: 11.5px; }
.menu-btn .caret { margin-left: 4px; }
.burger { width: 11px; height: 9px; margin-right: 8px; border-top: 1px solid #333; border-bottom: 1px solid #333; position: relative; }
.burger::after { content: ""; position: absolute; left: 0; right: 0; top: 3px; height: 1px; background: #333; }
.q-sep { width: 1px; height: 22px; background: #ddd; margin: 0 12px 0 9px; flex: none; }
.filter { width: 130px; height: 21px; font-size: 11px; line-height: 19px; border: 1px solid #777; background: #fff; padding-left: 2px; flex: none; }
.qicons { display: flex; align-items: center; gap: 8px; margin-left: 287px; flex: none; }
.q { width: 17px; height: 17px; flex: none; }
.q-sep-m { margin: 0 6px; }

.main { flex: 1; display: flex; min-height: 0; }
.rail { flex: none; width: 33px; background: #dcdcdc; border-right: 2px solid #999; display: flex; flex-direction: column; }
.rail-item { flex: none; height: 42px; display: flex; align-items: center; justify-content: center; }
.rail-gear { height: 24px; }
.rail-first { margin-top: 16px; }
.rail-active { height: 44px; margin: 0 -2px -2px 2px; background: #fff; border: 1px solid #bbb; border-right: 0; }
.rail-ico { width: 27px; height: 27px; }
.rail-ico16 { width: 16px; height: 16px; color: #333; }

.nav { flex: none; width: 385px; padding: 0 10px 0 5px; display: flex; flex-direction: column; }
.nav-title { flex: none; height: 28px; line-height: 28px; padding-left: 4px; font-size: 11.5px; }
.tree { flex: none; height: 270px; display: flex; border: 1px solid #d8d8d8; border-bottom: 0; overflow: hidden; }
.tree-body { flex: 1; min-width: 0; display: flex; flex-direction: column; }
.tree-head { flex: none; height: 21px; background: #f0f0f0; display: flex; align-items: center; padding-left: 7px; font-size: 12px; border-bottom: 1px solid #e4e4e4; }
.th-up { width: 0; height: 0; border: 5px solid transparent; border-bottom: 5px solid #111; border-top: 0; margin-left: 17px; }
.row { flex: none; height: 20px; display: grid; grid-template-columns: 29px 10px 16px 16px 128px 24px 24px 1fr; align-items: center; border-bottom: 1px solid #e8e8e8; font-size: 12px; line-height: 20px; white-space: nowrap; }
.row:nth-child(odd) { background: #fafafa; }
.branch { grid-column: 2; height: 20px; border-left: 1px dotted #777; position: relative; align-self: start; }
.branch::after { content: ""; position: absolute; left: 0; right: 0; top: 10px; border-top: 1px dotted #777; }
.row .r16 { width: 16px; height: 16px; }
.row-last .branch { height: 11px; }
.rname { padding-left: 3px; overflow: hidden; align-self: start; height: 19px; }
.dim .rname { color: #999; }
.strong .rname { font-weight: 700; color: #111; }
.row .c { height: 20px; border-left: 1px solid #e4e4e4; display: flex; align-items: center; justify-content: center; }
.row-tail { grid-template-columns: 199px 24px 24px 1fr; }
.chk { width: 17px; height: 17px; fill: none; stroke: #2ecf4a; stroke-width: 2.400; }
.vscroll { flex: none; width: 16px; display: flex; flex-direction: column; background: #f0f0f0; }
.thumb { flex: 1; background: #c8c8c8; }
.chev { flex: none; width: 9px; height: 6px; margin: 6px auto; }

.sash { flex: none; height: 5px; background: #ccc; border: 1px solid #bbb; border-left-color: #ccc; }
.panel { flex: none; border: 1px solid #e0e0e0; border-top: 0; border-bottom: 0; padding-left: 6px; }
.panel-search { height: 97px; border-bottom: 2px solid #dcdcdc; }
.panel-rel { flex: 1; overflow: hidden; }
.ph { height: 27px; display: flex; align-items: center; gap: 1px; color: #1a6f96; font-size: 14px; padding: 0 0 2px 1px; }
.tri { display: block; width: 0; height: 0; border: 4px solid transparent; border-top: 5px solid #0a6088; border-bottom: 0; margin: 0 6px 0 0; border-left-width: 5px; border-right-width: 5px; }
.tri-r { border: 4px solid transparent; border-left: 5px solid #0a6088; border-right: 0; margin: 0 8px 0 3px; }
.sr1 { display: flex; align-items: center; gap: 4px; }
.sinput { width: 247px; height: 23px; border: 1px solid #777; background: #fff; }
.ib { flex: none; width: 24px; height: 24px; border: 1px solid #888; display: flex; align-items: center; justify-content: center; background: #fff; }
.ib svg { width: 17px; height: 17px; }
.ib-t { margin-left: -2px; }
.sr2 { display: flex; align-items: center; margin-top: 1px; height: 24px; width: 357px; }
.cb { width: 13px; height: 13px; border: 1px solid #333; flex: none; }
.cb svg { width: 11px; height: 11px; }
.cbl { margin-left: 5px; font-size: 12px; }
.sr2-right { margin-left: auto; display: flex; align-items: center; gap: 2px; }
.nomatch { width: 36px; font-size: 12px; white-space: nowrap; }
.rel { display: flex; gap: 2px; }
.rel-list { width: 323px; height: 110px; border: 1px solid #e0e0e0; display: flex; flex-direction: column; padding: 0 1px; }
.rel-list span { flex: none; height: 20px; border-bottom: 1px solid #e8e8e8; }
.rel-list span:nth-child(even) { background: #f9f9f9; }
.rel-btns { display: flex; flex-direction: column; gap: 2px; }
.rb { width: 32px; height: 32px; border: 1px solid #777; display: flex; align-items: center; justify-content: center; }
.rb svg { width: 28px; height: 28px; }
.rb-off { border-color: #ccc; }

.graphics { flex: 1; min-width: 0; position: relative; display: flex; flex-direction: column; border-left: 2px solid #bbb; }
.gtabs { flex: none; height: 26px; background: #fff; border-bottom: 2px solid #005f87; padding-left: 100px; }
.gtab { display: flex; align-items: center; width: 30px; height: 24px; background: #005f87; color: #ccc; gap: 4px; }
.gtab-ico { width: 12px; height: 12px; }
.gtab-x { font-size: 12px; line-height: 12px; }
.canvas { flex: 1; width: 100%; min-height: 0; }
.vline { stroke: #000; stroke-width: 1; shape-rendering: crispEdges; }
.axis { font: 11px "Liberation Sans", sans-serif; fill: #1a1aff; }
.selbar { position: absolute; left: 281px; top: 32px; width: 261px; height: 33px; padding-left: 13px; display: flex; align-items: center; background: #fff; border-bottom: 1px solid #ddd; }
.selcurve { width: 156px; height: 21px; font-size: 11px; border: 1px solid #777; background: #fff; padding: 0 4px 0 2px; display: flex; align-items: center; justify-content: space-between; flex: none; }
.selico { width: 24px; height: 24px; margin-left: 9px; flex: none; }
.seldots { margin-left: 12px; width: 15px; font: 700 14px/14px "Liberation Sans", sans-serif; letter-spacing: 1px; color: #333; }
.selsep { width: 1px; height: 26px; background: #ddd; margin-left: 16px; }
.selcaret { margin: 8px 0 0 4px; border-width: 3px; }
.watermark { position: absolute; right: 2px; bottom: 2px; font: 14px/16px "Liberation Mono", monospace; color: #777; white-space: nowrap; }
.wm-cjk { font: 16px/16px "Noto Sans CJK SC", sans-serif; }

.dialog { position: absolute; left: 192px; top: 0; width: 328px; height: 403px; background: #eeeeee; border: 1px solid #ccc; border-top: 0; display: flex; flex-direction: column; }
.dlg-title { flex: none; height: 24px; background: #005f87; margin: 0 -1px; display: flex; align-items: center; padding-left: 7px; color: #fff; }
.dlg-gear { width: 15px; height: 15px; color: #fff; }
.dlg-name { margin-left: 7px; flex: 1; font-size: 13px; }
.dlg-ctl { width: 15px; height: 15px; }
.dlg-q { width: 28px; text-align: center; font: 700 16px/20px "Open Sans", sans-serif; }
.dlg-ctl:last-child { margin-right: 9px; }
.dlg-body { flex: 1; padding: 4px 5px 0; display: flex; flex-direction: column; gap: 4px; }
.sec { flex: none; background: #fff; border-bottom: 1px solid #ccc; }
.sec-h { height: 26px; display: flex; align-items: center; padding-left: 8px; color: #1a6f96; font-size: 14px; }
.sec-h-c { height: 22px; padding-top: 3px; }
.pick-row { display: flex; gap: 2px; padding: 4px 9px 7px 8px; }
.pick-main { flex: 1; height: 32px; background: #ffdd75; display: flex; align-items: center; padding-left: 1px; gap: 4px; font-size: 12px; color: #222; }
.pick-chk { width: 15px; height: 15px; fill: none; stroke: #2ecf4a; stroke-width: 2.200; }
.pick-btn { width: 33px; height: 32px; background: #ffdd75; display: flex; align-items: center; justify-content: center; }
.pick-btn svg { width: 28px; height: 28px; }
.sec-cross { padding-bottom: 8px; }
.sec-set { padding-bottom: 7px; }
.f-row { display: flex; align-items: center; height: 24px; margin-top: 3px; padding: 0 9px 0 8px; font-size: 13px; }
.sec-h + .f-row { margin-top: 4px; }
.f-row label { flex: 1; }
.box { height: 24px; border: 1px solid #777; display: flex; align-items: center; background: #fff; }
.box-w { width: 141px; padding: 0 6px 0 4px; }
.box-s { width: 82px; padding: 0 3px; }
.val { flex: 1; font-size: 12.5px; }
.val-cn { font-size: 12px; }
.val-tol { font: 15px/22px "Liberation Mono", monospace; letter-spacing: 1.500px; }
.unit { font-size: 12px; margin-right: 10px; }
.box-s .unit { margin-right: 0; }
.sel { background: #0a6fd0; color: #fff; border-left: 1px solid #e87a10; }
.show { flex: none; display: flex; justify-content: flex-end; align-items: center; gap: 2px; padding-right: 4px; height: 24px; margin-top: 1px; font-size: 12px; }
.show-btn { width: 24px; height: 24px; border: 1px solid #777; }
.show-btn svg { width: 22px; height: 22px; }
.fold { flex: none; height: 14px; display: flex; justify-content: center; align-items: center; border-bottom: 1px solid #ccc; }
.fold-up { width: 0; height: 0; border: 5px solid transparent; border-bottom: 5px solid #111; border-top: 0; }
.act { flex: none; display: flex; justify-content: flex-end; gap: 5px; padding-right: 10px; margin-top: 4px; }
.btn { width: 54px; height: 25px; border: 1px solid #005f87; display: flex; align-items: center; justify-content: center; background: #fff; color: #1a6f96; font-size: 12px; }
.btn-ok { background: #005f87; color: #fff; }

.marks { position: absolute; left: 0; top: 0; width: 1049px; height: 707px; pointer-events: none; }
```
